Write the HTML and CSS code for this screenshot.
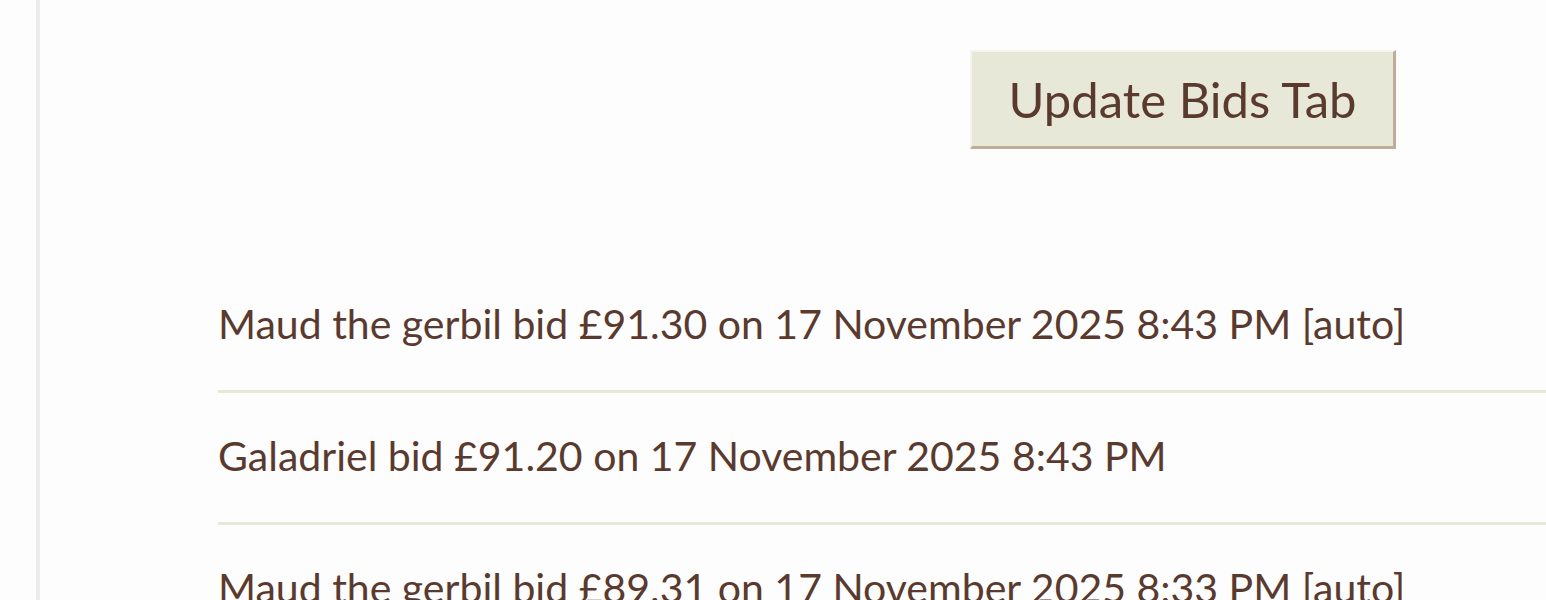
FILE: index.html
```html
<!DOCTYPE html>
<html lang="en">
<head>
<meta charset="utf-8">
<title>Bids</title>
<link rel="stylesheet" href="styles.css">
</head>
<body>
<div class="page">
  <main class="content">
    <div class="actions">
      <button class="update-btn" type="button">Update Bids Tab</button>
    </div>
    <ul class="bids">
      <li class="bid">Maud the gerbil bid £91.30 on 17 November 2025 8:43 PM [auto]</li>
      <li class="bid">Galadriel bid £91.20 on 17 November 2025 8:43 PM</li>
      <li class="bid">Maud the gerbil bid £89.31 on 17 November 2025 8:33 PM [auto]</li>
    </ul>
  </main>
</div>
</body>
</html>
```

FILE: styles.css
```css
html, body {
  margin: 0;
  padding: 0;
  background: #fdfdfd;
  height: 100%;
  overflow: hidden;
}
body {
  font-family: "Lato", "Liberation Sans", sans-serif;
  color: #5a3a2e;
}
.page {
  margin-left: 36px;
  border-left: 4px solid #ececec;
  min-height: 100%;
}
.content {
  padding-left: 178px;
}
.actions {
  display: flex;
  justify-content: flex-end;
  padding-top: 50px;
  padding-right: 150px;
}
.update-btn {
  font-family: inherit;
  font-size: 49px;
  color: #5a3a2e;
  background: #e8e8d8;
  border-style: solid;
  border-width: 2px 3px 3px 2px;
  border-color: #f4f4ec #c0ac98 #c0ac98 #f4f4ec;
  width: 426px;
  height: 99px;
  padding: 0;
  cursor: pointer;
}
.bids {
  list-style: none;
  margin: 137px 0 0 0;
  padding: 0;
}
.bid {
  font-size: 41px;
  line-height: 48px;
  padding: 14px 0 42px 0;
  border-bottom: 3px solid #e8e8d8;
}
.bid + .bid {
  padding-top: 39px;
}
```
